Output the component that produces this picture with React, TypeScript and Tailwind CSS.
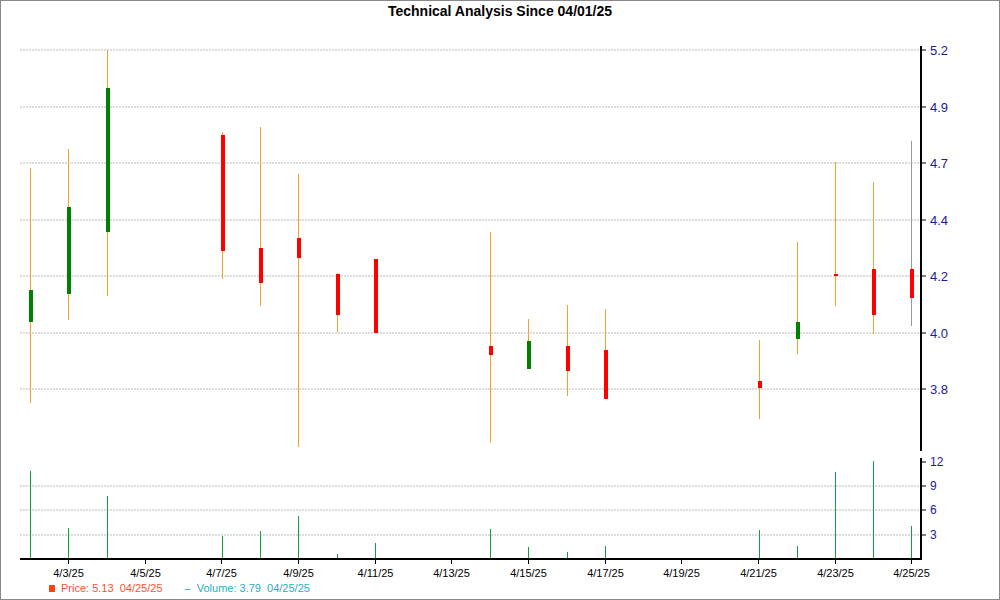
const candles: [number, number, number, number, number, string][] = [
  // x, wickTop, wickBot, bodyTop, bodyBot, color
  [30, 167, 402, 289, 321, "#008000"],
  [68, 148, 319, 206, 293, "#008000"],
  [107, 49, 295, 87, 231, "#008000"],
  [222, 131, 278, 134, 250, "#ff0000"],
  [260, 126, 305, 247, 282, "#ff0000"],
  [298, 173, 446, 237, 257, "#ff0000"],
  [337, 272, 331, 273, 314, "#ff0000"],
  [375, 258, 332, 258, 332, "#ff0000"],
  [490, 231, 442, 345, 354, "#ff0000"],
  [528, 318, 368, 340, 368, "#008000"],
  [567, 304, 395, 345, 370, "#ff0000"],
  [605, 308, 398, 349, 398, "#ff0000"],
  [759, 339, 418, 380, 387, "#ff0000"],
  [797, 241, 353, 321, 338, "#008000"],
  [835, 161, 305, 273, 275, "#ff0000"],
  [873, 181, 333, 268, 314, "#ff0000"],
  [911, 140, 325, 268, 297, "#ff0000"],
];
const vols: [number, number][] = [
  [30, 470], [68, 527], [107, 495], [222, 535], [260, 530], [298, 515], [337, 553], [375, 542],
  [490, 528], [528, 546], [567, 551], [605, 545], [759, 529], [797, 545], [835, 471], [873, 460], [911, 525],
];
const grid: [number, string][] = [[49, "5.2"], [106, "4.9"], [162, "4.7"], [219, "4.4"], [275, "4.2"], [332, "4.0"], [388, "3.8"]];
const vgrid: [number, string][] = [[461, "12"], [485, "9"], [509, "6"], [534, "3"]];
const dates: [number, string][] = [[68, "4/3/25"], [145, "4/5/25"], [221, "4/7/25"], [298, "4/9/25"], [375, "4/11/25"], [451, "4/13/25"], [528, "4/15/25"], [605, "4/17/25"], [681, "4/19/25"], [758, "4/21/25"], [835, "4/23/25"], [911, "4/25/25"]];

export default function App() {
  return (
    <div className="w-[1000px] h-[600px] border border-[#888] bg-white flex flex-col" style={{ fontFamily: '"Liberation Sans", Arial, sans-serif' }}>
      <div className="h-[20px] flex items-center justify-center text-[14px] font-bold text-black">Technical Analysis Since 04/01/25</div>
      <svg width="998" height="558" viewBox="1 20 998 558" className="block">
        {grid.map(([y]) => <line key={y} x1={20} x2={921} y1={y} y2={y} stroke="#bbb" strokeDasharray="2 1" />)}
        {vgrid.slice(1).map(([y]) => <line key={y} x1={20} x2={921} y1={y} y2={y} stroke="#bbb" strokeDasharray="2 1" />)}
        {candles.map(([x, wt, wb, bt, bb, c]) => (
          <g key={x}>
            <line x1={x + 0.5} x2={x + 0.5} y1={wt} y2={wb} stroke={x === 911 ? "#999" : "#f5a030"} />
            <rect x={x - 1} y={bt} width={4} height={Math.max(bb - bt, 2)} fill={c} />
          </g>
        ))}
        {vols.map(([x, y]) => <line key={x} x1={x + 0.5} x2={x + 0.5} y1={y} y2={558} stroke="#13a040" />)}
        <line x1={921} x2={921} y1={45} y2={450} stroke="#000" strokeWidth={2} />
        <line x1={921} x2={921} y1={457} y2={558} stroke="#000" strokeWidth={2} />
        <line x1={20} x2={922} y1={558} y2={558} stroke="#000" strokeWidth={2} />
        {grid.map(([y, t]) => (
          <g key={t}>
            <line x1={921} x2={926} y1={y} y2={y} stroke="#000" />
            <text x={930} y={y + 5} fontSize={13} fill="#1a1a9a">{t}</text>
          </g>
        ))}
        {vgrid.map(([y, t]) => (
          <g key={t}>
            <line x1={921} x2={926} y1={y} y2={y} stroke="#000" />
            <text x={930} y={y + 4} fontSize={12} fill="#1a1a9a">{t}</text>
          </g>
        ))}
        {dates.map(([x, t]) => (
          <g key={t}>
            <line x1={x + 0.5} x2={x + 0.5} y1={558} y2={563} stroke="#000" />
            <text x={x + 0.5} y={576} fontSize={11} textAnchor="middle" fill="#000">{t}</text>
          </g>
        ))}
      </svg>
      <div className="flex items-center gap-[22px] pl-[48px] text-[11px] h-[18px]">
        <span className="flex items-center gap-[6px] text-[#ff5030]"><span className="w-[6px] h-[7px] bg-[#ff4010] inline-block" />Price: 5.13&nbsp;&nbsp;04/25/25</span>
        <span className="text-[#20b0c0]">–&nbsp;&nbsp;Volume: 3.79&nbsp;&nbsp;04/25/25</span>
      </div>
    </div>
  );
}
